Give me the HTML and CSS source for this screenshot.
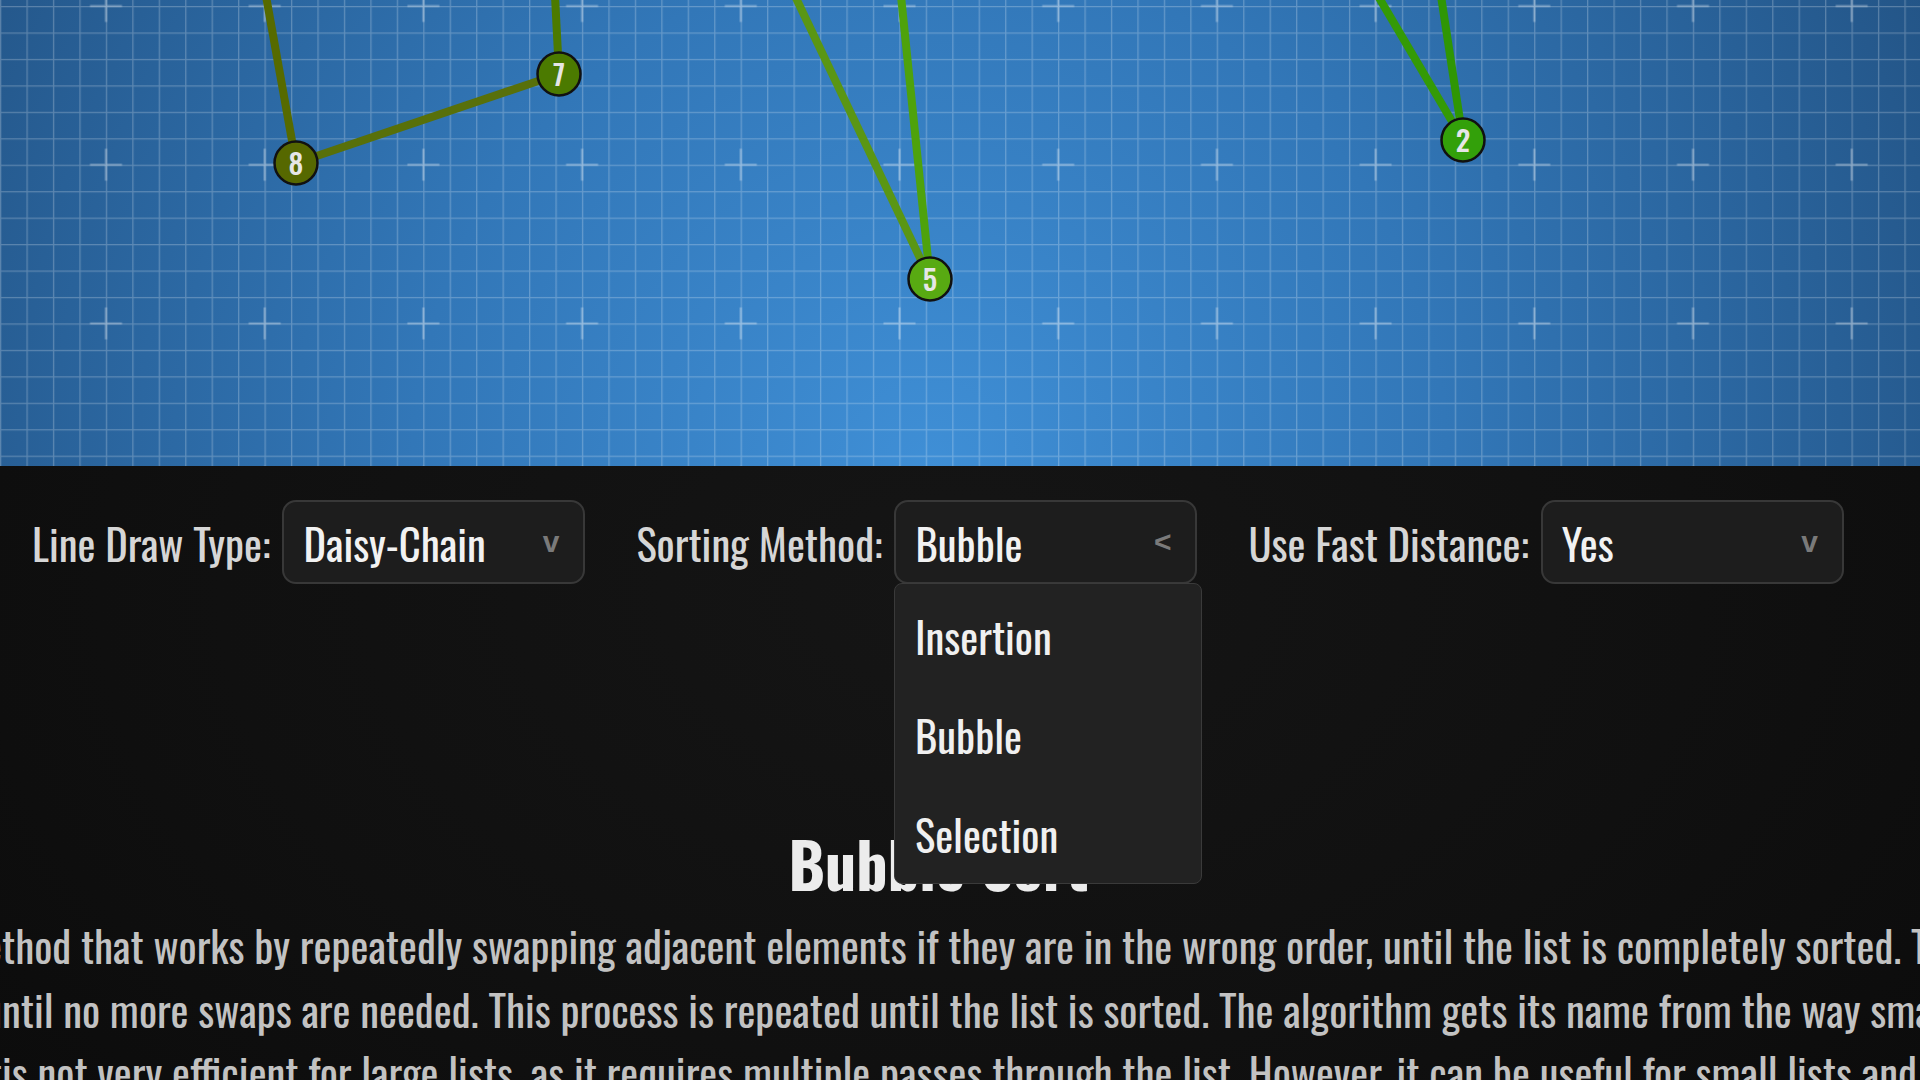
FILE: index.html
```html
<!DOCTYPE html>
<html lang="en">
<head>
<meta charset="utf-8">
<title>Sorting Visualizer</title>
<link rel="stylesheet" href="styles.css">
</head>
<body>
<div class="page">
  <svg class="canvas" width="1920" height="466" viewBox="0 0 1920 466" xmlns="http://www.w3.org/2000/svg">
    <defs>
      <radialGradient id="bg" gradientUnits="userSpaceOnUse" cx="930" cy="470" r="1150">
        <stop offset="0" stop-color="#3f8fd6"/>
        <stop offset="0.45" stop-color="#3277b8"/>
        <stop offset="1" stop-color="#225283"/>
      </radialGradient>
      <pattern id="minor" patternUnits="userSpaceOnUse" x="0" y="6" width="26.45" height="26.45">
        <path d="M0 0.5 H26.45 M0.5 0 V26.45" stroke="rgba(255,255,255,0.24)" stroke-width="1.6" fill="none"/>
      </pattern>
      <pattern id="major" patternUnits="userSpaceOnUse" x="26.65" y="-73.35" width="158.7" height="158.7">
        <path d="M63.35 79.35 H95.35 M79.35 63.35 V95.35" stroke="rgba(255,255,255,0.32)" stroke-width="2.2" fill="none"/>
      </pattern>
    </defs>
    <rect width="1920" height="466" fill="url(#bg)"/>
    <rect width="1920" height="466" fill="url(#minor)"/>
    <rect width="1920" height="466" fill="url(#major)"/>
    <g stroke-width="8" fill="none">
      <line x1="266" y1="-4" x2="296" y2="163" stroke="#566a00"/>
      <line x1="296" y1="163" x2="559" y2="74" stroke="#58700a"/>
      <line x1="555" y1="-4" x2="559" y2="74" stroke="#4c7a00"/>
      <line x1="795" y1="-4" x2="930" y2="279" stroke="#5a9614"/>
      <line x1="901" y1="-4" x2="930" y2="279" stroke="#4ea20c"/>
      <line x1="1378" y1="-4" x2="1463" y2="140" stroke="#349a06"/>
      <line x1="1441" y1="-4" x2="1463" y2="140" stroke="#2f9604"/>
    </g>
    <g stroke="#111" stroke-width="2.5">
      <circle cx="296" cy="163" r="21.5" fill="#566800"/>
      <circle cx="559" cy="74" r="21.5" fill="#4b7a00"/>
      <circle cx="930" cy="279" r="21.5" fill="#58aa12"/>
      <circle cx="1463" cy="140" r="21.5" fill="#33a00a"/>
    </g>
    <g class="node-label" text-anchor="middle">
      <text x="296" y="175">8</text>
      <text x="559" y="86">7</text>
      <text x="930" y="291">5</text>
      <text x="1463" y="152">2</text>
    </g>
  </svg>

  <div class="content">
    <div class="controls">
      <div class="field">
        <span class="label">Line Draw Type:</span>
        <div class="select"><span class="value">Daisy-Chain</span><span class="arrow">v</span></div>
      </div>
      <div class="field">
        <span class="label">Sorting Method:</span>
        <div class="select open">
          <span class="value">Bubble</span><span class="arrow">&lt;</span>
          <ul class="menu">
            <li>Insertion</li>
            <li>Bubble</li>
            <li>Selection</li>
          </ul>
        </div>
      </div>
      <div class="field">
        <span class="label">Use Fast Distance:</span>
        <div class="select"><span class="value">Yes</span><span class="arrow">v</span></div>
      </div>
    </div>

    <h1 class="title">Bubble Sort</h1>
    <div class="desc">
      <div class="pline"><span class="pre">Bubble Sort is a simple sorting me</span>thod that works by repeatedly swapping adjacent elements if they are in the wrong order, until the list is completely sorted. The algorithm steps through the list,</div>
      <div class="pline"><span class="pre">compares adjacent items and swaps them, u</span>ntil no more swaps are needed. This process is repeated until the list is sorted. The algorithm gets its name from the way smaller elements "bubble" to the top.</div>
      <div class="pline"><span class="pre">Bubble Sort </span>is not very efficient for large lists, as it requires multiple passes through the list. However, it can be useful for small lists and for teaching purposes.</div>
    </div>
  </div>
</div>
</body>
</html>
```
FILE: styles.css
```css
html, body {
  margin: 0;
  height: 100%;
  overflow: hidden;
}

body {
  background: radial-gradient(ellipse 70% 80% at 50% 55%, #151515 0%, #101010 55%, #0b0b0b 100%);
  font-family: "Oswald", "Open Sans", sans-serif;
  font-stretch: 75%;
  color: #dcdcdc;
}

.page {
  width: 1920px;
}

.canvas {
  display: block;
  width: 1920px;
  height: 466px;
}

.node-label {
  font-family: "Oswald", "Open Sans", sans-serif;
  font-weight: 500;
  font-size: 29px;
  fill: #e6e6e6;
}

.content {
  width: 1877px;
}

.controls {
  display: flex;
  align-items: center;
  gap: 51px;
  height: 84px;
  margin-top: 34px;
  padding-left: 32px;
}

.field {
  display: flex;
  align-items: center;
  gap: 12px;
}

.label {
  font-size: 42.7px;
  color: #d6d6d6;
  white-space: nowrap;
}

.select {
  position: relative;
  box-sizing: border-box;
  width: 303px;
  height: 84px;
  padding: 0 24px 0 19px;
  border: 2px solid #383838;
  border-radius: 14px;
  background: #1d1d1d;
  display: flex;
  align-items: center;
  justify-content: space-between;
  font-size: 42.7px;
  color: #f2f2f2;
}

.arrow {
  font-family: "Liberation Sans", Arial, sans-serif;
  font-stretch: normal;
  font-weight: 700;
  font-size: 30px;
  color: #7a7a7a;
}

.menu {
  position: absolute;
  top: calc(100% + 1px);
  left: -2px;
  z-index: 5;
  box-sizing: border-box;
  width: 308px;
  margin: 0;
  padding: 2px 0 0;
  list-style: none;
  background: #222222;
  border: 1.5px solid #3a3a3a;
  border-radius: 8px;
}

.menu li {
  height: 99px;
  display: flex;
  align-items: center;
  padding-left: 19.5px;
  color: #f0f0f0;
}

.title {
  margin: 239px 0 10px;
  font-size: 62px;
  line-height: 80px;
  font-weight: 700;
  text-align: center;
  color: #ececec;
}

.desc {
  font-size: 42.7px;
  line-height: 63.5px;
  color: #c2c2c2;
}

.pline {
  display: flex;
  white-space: nowrap;
  padding-left: 2px;
}

.pre {
  display: flex;
  justify-content: flex-end;
  flex: none;
  width: 0;
}
```
